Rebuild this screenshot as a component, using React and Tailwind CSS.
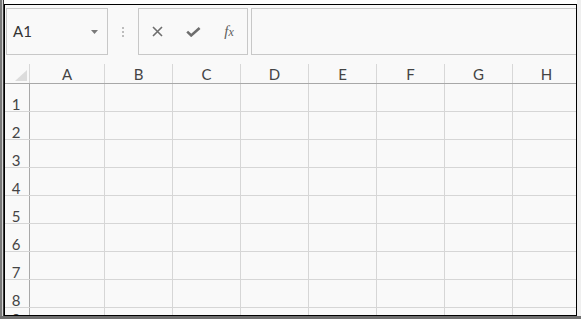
import React from "react";

const columns = ["B", "C", "D", "E", "F", "G", "H"];
const rows = [1, 2, 3, 4, 5, 6, 7, 8];

const NameBox = () => (
  <div className="flex h-[47px] w-[102px] shrink-0 items-center justify-between border border-[#c8c8c8] pl-[6px] pr-[9px]">
    <span className="text-[15px] leading-none text-[#333]">A1</span>
    <svg width="7" height="4" viewBox="0 0 7 4">
      <path d="M0 0 L7 0 L3.5 4 Z" fill="#7a7a7a" />
    </svg>
  </div>
);

const FormulaButtons = () => (
  <div className="flex h-[47px] w-[110px] shrink-0 border border-[#c8c8c8]">
    <div className="flex w-[36px] items-center justify-center">
      <svg width="11" height="11" viewBox="0 0 11 11">
        <path d="M1 1 L10 10 M10 1 L1 10" stroke="#6e6e6e" strokeWidth="1.6" />
      </svg>
    </div>
    <div className="flex w-[36px] items-center justify-center">
      <svg width="15" height="10" viewBox="0 0 15 10">
        <path d="M1.2 4.6 L5.2 8.4 L13.6 1" stroke="#6e6e6e" strokeWidth="2.6" fill="none" />
      </svg>
    </div>
    <div className="flex w-[36px] items-center justify-center">
      <span className="font-['Liberation_Serif',serif] text-[15px] italic leading-none text-[#5e5e5e]">
        f<span className="text-[12px]">x</span>
      </span>
    </div>
  </div>
);

const HeaderRow = () => (
  <div className="flex h-[29px] shrink-0 border-b border-[#a8a8a8]">
    <div className="flex w-[24px] shrink-0 items-end justify-end pb-[2px] pr-[2px]">
      <svg width="12" height="11" viewBox="0 0 12 11">
        <path d="M12 0 L12 11 L0 11 Z" fill="#dcdcdc" />
      </svg>
    </div>
    <div className="flex w-[75px] shrink-0 flex-col pt-[9px]">
      <div className="flex h-full items-center justify-center border-l border-[#d8d8d8] pt-[2px] text-[15px] text-[#444]">
        A
      </div>
    </div>
    {columns.map((col) => (
      <div key={col} className="flex w-[68px] shrink-0 flex-col pt-[9px]">
        <div className="flex h-full items-center justify-center border-l border-[#d8d8d8] pt-[2px] text-[15px] text-[#444]">
          {col}
        </div>
      </div>
    ))}
  </div>
);

const GridRow = ({ label, last }) => (
  <div className={`flex shrink-0 ${last ? "h-[28px]" : "h-[28px] border-b border-[#d6d6d6]"}`}>
    <div
      className={`flex w-[24px] shrink-0 justify-center pr-[2px] text-[15px] leading-[16px] text-[#444] ${
        last ? "items-start pt-[3px]" : "items-end"
      }`}
    >
      <span className={last ? "" : "mb-[-1px]"}>{label}</span>
    </div>
    <div className="w-[75px] shrink-0 border-l border-[#a8a8a8]" />
    {columns.map((col) => (
      <div key={col} className="w-[68px] shrink-0 border-l border-[#d6d6d6]" />
    ))}
  </div>
);

const App = () => {
  return (
    <div className="flex h-[319px] w-[581px] flex-col overflow-hidden bg-white font-['Lato','Noto_Sans',sans-serif]">
      <div className="flex h-[316px] shrink-0">
        <div className="w-[2px] shrink-0 bg-[#7a7a7a]" />
        <div className="w-[1px] shrink-0 bg-[#d4d4d4]" />
        <div className="w-[1px] shrink-0 bg-[#3a3a3a]" />
        <div className="flex w-[573px] shrink-0 flex-col">
          <div className="h-[4px] shrink-0 bg-white" />
          <div className="flex flex-1 flex-col overflow-hidden border border-black bg-[#f9f9f9]">
            <div className="flex h-[50px] shrink-0 items-start pl-[1px] pt-[3px]">
              <NameBox />
              <div className="flex h-[47px] w-[30px] shrink-0 flex-col items-center justify-center gap-[2px] pr-[1px]">
                <div className="h-[2px] w-[2px] bg-[#bdbdbd]" />
                <div className="h-[2px] w-[2px] bg-[#bdbdbd]" />
                <div className="h-[2px] w-[2px] bg-[#bdbdbd]" />
              </div>
              <FormulaButtons />
              <div className="ml-[3px] h-[47px] flex-1 border border-r-0 border-[#c8c8c8]" />
            </div>
            <HeaderRow />
            {rows.map((r) => (
              <GridRow key={r} label={r} />
            ))}
            <GridRow label={9} last />
          </div>
        </div>
        <div className="w-[4px] shrink-0 bg-[#efefef]" />
      </div>
      <div className="h-[3px] shrink-0 bg-[#6f6f6f]" />
    </div>
  );
};

export default App;
